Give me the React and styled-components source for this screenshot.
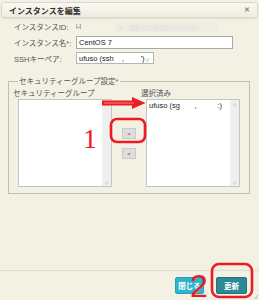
import React from 'react';
import styled, { createGlobalStyle } from 'styled-components';

const Global = createGlobalStyle`
  html, body { margin: 0; padding: 0; background: #f3f1e4; }
  body {
    font-family: "Liberation Sans", "Noto Sans CJK JP", sans-serif;
    font-size: 7.5px;
    color: #333;
  }
  * { box-sizing: border-box; }
`;

const Dialog = styled.div`
  position: relative;
  width: 259px;
  height: 300px;
  display: flex;
  flex-direction: column;
  overflow: hidden;
`;

const TitleBar = styled.div`
  margin: 2px 1px 0 1px;
  height: 16px;
  border: 1px solid #dcd8c8;
  border-radius: 3px;
  background: linear-gradient(#f9f8f2, #efece0);
  box-shadow: 0 1px 2px rgba(0, 0, 0, 0.08);
  display: flex;
  align-items: center;
  justify-content: space-between;
  padding: 0 7px 0 7px;
`;

const Title = styled.span`
  font-weight: bold;
  font-size: 8px;
  color: #333;
`;

const Close = styled.span`
  font-size: 7px;
  font-weight: bold;
  color: #888;
`;

const Content = styled.div`
  flex: 1;
  display: flex;
  flex-direction: column;
  padding: 0 9px 0 8px;
`;

const Rows = styled.div`
  display: grid;
  grid-auto-rows: 16px;
`;

const Row = styled.div`
  display: grid;
  grid-template-columns: 62px auto;
  align-items: center;
  padding-left: 6px;
`;

const Label = styled.span`
  color: #555;
  white-space: nowrap;
`;

const Req = styled.span`
  color: #e33;
`;

const Value = styled.span`
  color: #666;
  font-size: 6.5px;
`;

const TextInput = styled.div`
  width: 157px;
  height: 13px;
  background: #fff;
  border: 1px solid #a8a8a8;
  display: flex;
  align-items: center;
  padding-left: 2px;
  color: #222;
`;

const Select = styled.div`
  width: 78px;
  height: 12px;
  background: #fff;
  border: 1px solid #b5b5b5;
  display: flex;
  align-items: center;
  justify-content: space-between;
  padding: 0 3px 0 2px;
  color: #222;
  white-space: pre;
`;

const Chevron = styled.span`
  color: #888;
  font-size: 5px;
`;

const Fieldset = styled.fieldset`
  margin: 11px 0 0 0;
  width: 242px;
  border: 1px solid #c2bfb2;
  padding: 0 9px 6px 4px;
`;

const Legend = styled.legend`
  margin-left: 5px;
  padding: 0 1px;
  color: #555;
  line-height: 9px;
`;

const Transfer = styled.div`
  display: grid;
  grid-template-columns: 99px 29px 99px;
  grid-template-rows: 11px 88px;
  row-gap: 1px;
  margin-top: 1px;
`;

const ColLabel = styled.span`
  color: #555;
  align-self: center;
  white-space: nowrap;
`;

const ListBox = styled.div`
  margin-left: 5px;
  width: 94px;
  height: 88px;
  background: #fff;
  border: 1px solid #c4c4c4;
  display: flex;
`;

const ListItems = styled.div`
  flex: 1;
  padding: 1px 2px;
  white-space: pre;
  color: #222;
`;

const Scrollbar = styled.div`
  width: 9px;
  background: #efefef;
  display: flex;
  flex-direction: column;
  justify-content: space-between;
  align-items: center;
  color: #b0b0b0;
  font-size: 5px;
  padding: 1px 0;
`;

const MoveButtons = styled.div`
  grid-column: 2;
  grid-row: 2;
  display: flex;
  flex-direction: column;
  gap: 9px;
  padding: 29px 0 0 10px;
`;

const MoveButton = styled.div`
  width: 14px;
  height: 11px;
  background: #dedede;
  border: 1px solid #c8c8c8;
  display: flex;
  align-items: center;
  justify-content: center;
  color: #444;
  font-size: 6px;
`;

const Footer = styled.div`
  height: 30px;
  border-top: 1px solid #e0dcc8;
  display: flex;
  justify-content: flex-end;
  align-items: flex-start;
  gap: 12px;
  padding: 6px 12px 0 0;
`;

const Button = styled.div`
  width: ${(p) => p.$w}px;
  height: 17px;
  border-radius: 2px;
  background: ${(p) => (p.$primary ? '#2b8a94' : '#30b5cc')};
  border: 1px solid ${(p) => (p.$primary ? '#21747d' : '#28a0b6')};
  color: #fff;
  font-weight: bold;
  font-size: 7.5px;
  display: flex;
  align-items: center;
  justify-content: center;
`;

const Ghost = styled.div`
  position: absolute;
  left: 114px;
  top: 22px;
  width: 103px;
  height: 10px;
  background: rgba(226, 229, 230, 0.35);
  color: #e0dfd8;
  font-size: 6px;
  display: flex;
  align-items: center;
  padding-left: 4px;
  gap: 6px;
`;

const Overlay = styled.svg`
  position: absolute;
  left: 0;
  top: 0;
  pointer-events: none;
`;

const Grip = styled.svg`
  position: absolute;
  right: 0;
  bottom: 0;
`;

export default function App() {
  const red = '#ec1c24';
  return (
    <>
      <Global />
      <Dialog>
        <TitleBar>
          <Title>インスタンスを編集</Title>
          <Close>✕</Close>
        </TitleBar>
        <Content>
          <Rows>
            <Row>
              <Label>インスタンスID:</Label>
              <Value>i-l</Value>
            </Row>
            <Row>
              <Label>
                インスタンス名<Req>*</Req>:
              </Label>
              <TextInput>CentOS 7</TextInput>
            </Row>
            <Row>
              <Label>SSHキーペア:</Label>
              <Select>
                <span>{'ufuso (ssh    ,        \')'}</span>
                <Chevron>∨</Chevron>
              </Select>
            </Row>
          </Rows>
          <Fieldset>
            <Legend>
              セキュリティーグループ設定<Req>*</Req>
            </Legend>
            <Transfer>
              <ColLabel>セキュリティーグループ</ColLabel>
              <span />
              <ColLabel>選択済み</ColLabel>
              <ListBox>
                <ListItems />
                <Scrollbar>
                  <span>∧</span>
                  <span>∨</span>
                </Scrollbar>
              </ListBox>
              <MoveButtons>
                <MoveButton>&gt;</MoveButton>
                <MoveButton>&lt;</MoveButton>
              </MoveButtons>
              <ListBox>
                <ListItems>{'ufuso (sg       ,          :)'}</ListItems>
                <Scrollbar>
                  <span>∧</span>
                  <span>∨</span>
                </Scrollbar>
              </ListBox>
            </Transfer>
          </Fieldset>
        </Content>
        <Footer>
          <Button $w={29}>閉じる</Button>
          <Button $w={31} $primary>
            更新
          </Button>
        </Footer>
        <Ghost>
          <span>✕</span>
          <span>回転先の構成の(5)割り(R)</span>
        </Ghost>
        <Grip width="6" height="6" viewBox="0 0 6 6">
          <path d="M5 1 L1 5 M5 3 L3 5" stroke="#aaa" strokeWidth="0.7" />
        </Grip>
        <Overlay width="259" height="300" viewBox="0 0 259 300">
          <path
            d="M102 100.5 H132 V97 L145.5 103 L132 109 V105.5 H102 Z"
            fill={red}
          />
          <path d="M104 103 H134" stroke="#f7a0a0" strokeWidth="0.8" />
          <rect x="111" y="119" width="34" height="23" rx="6" fill="none" stroke={red} strokeWidth="2.6" />
          <rect x="212" y="264" width="40" height="33" rx="7" fill="none" stroke={red} strokeWidth="2.6" />
          <text x="83" y="147.5" fontFamily="Liberation Serif, serif" fontSize="28" fill={red}>
            1
          </text>
          <text x="190" y="297" fontFamily="Liberation Sans, sans-serif" fontSize="32" fill={red}>
            2
          </text>
        </Overlay>
      </Dialog>
    </>
  );
}
